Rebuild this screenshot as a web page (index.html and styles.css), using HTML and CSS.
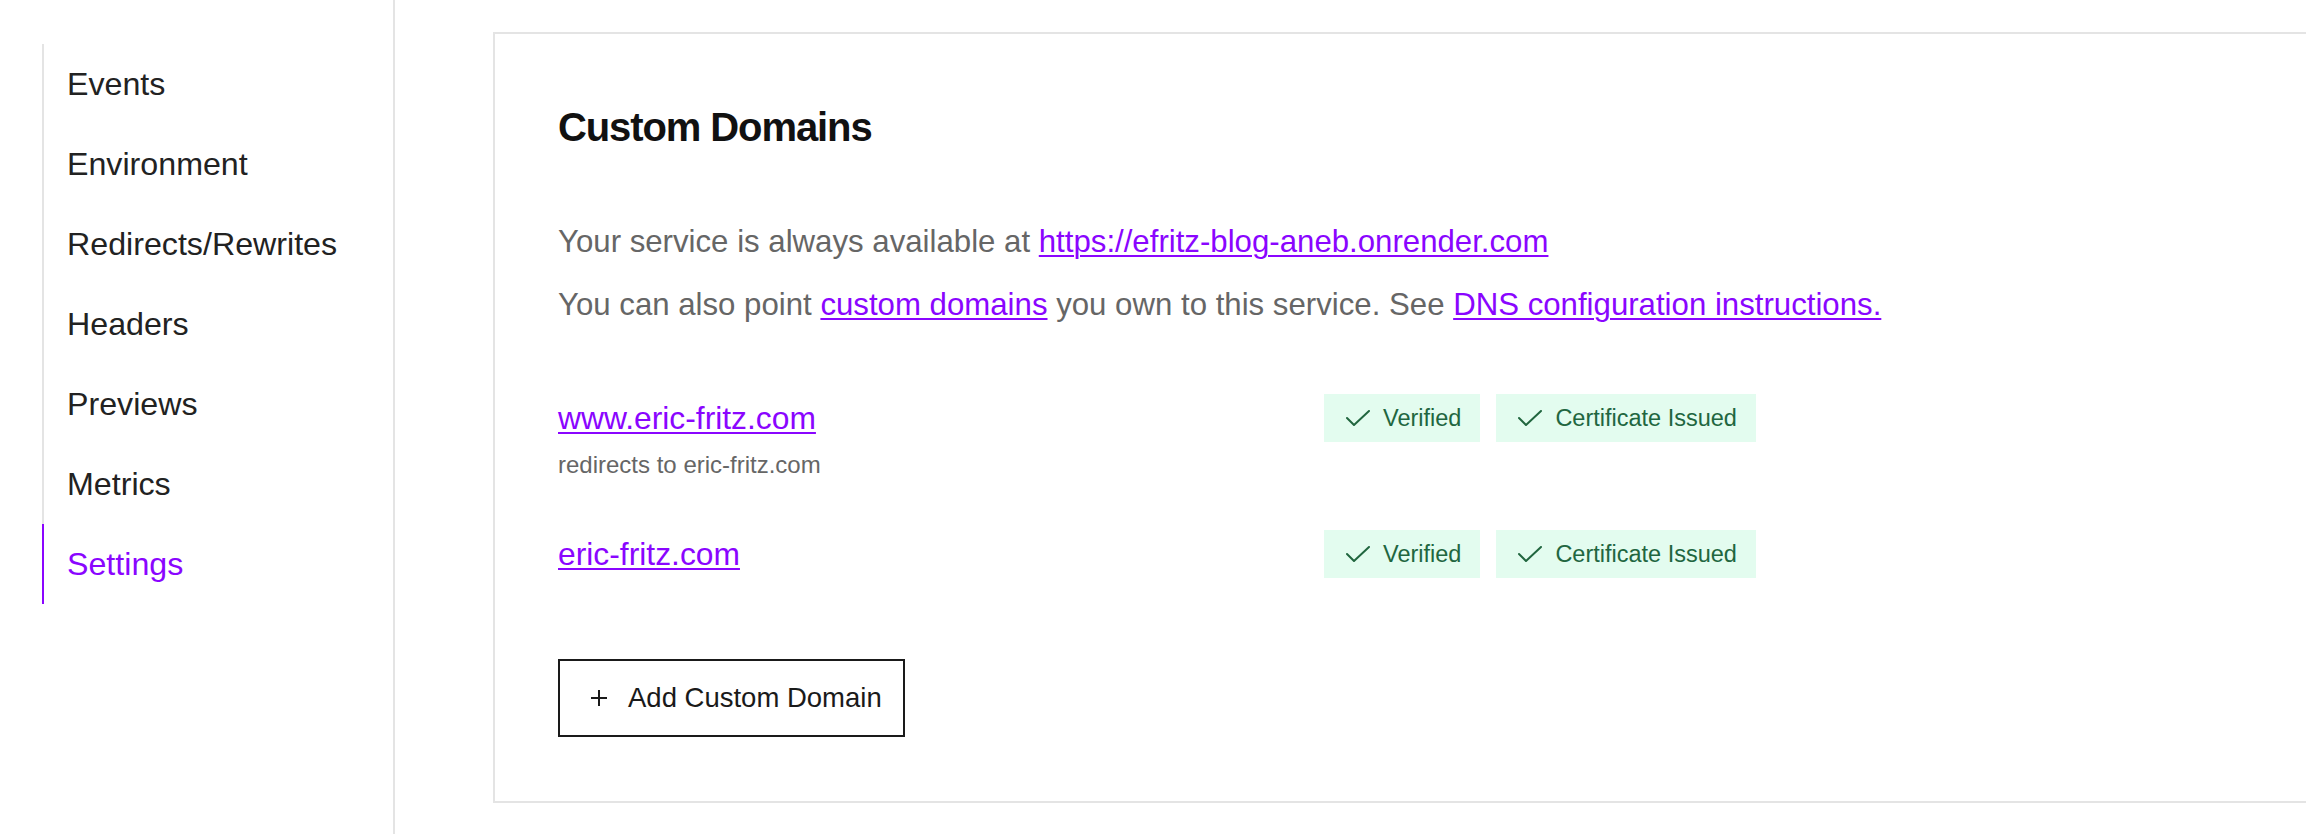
FILE: index.html
```html
<!DOCTYPE html>
<html lang="en">
<head>
<meta charset="utf-8">
<title>Settings – Custom Domains</title>
<link rel="stylesheet" href="styles.css">
</head>
<body>
<div class="app">
  <aside class="sidebar">
    <nav class="subnav">
      <a class="nav-item" href="#">Events</a>
      <a class="nav-item" href="#">Environment</a>
      <a class="nav-item" href="#">Redirects/Rewrites</a>
      <a class="nav-item" href="#">Headers</a>
      <a class="nav-item" href="#">Previews</a>
      <a class="nav-item" href="#">Metrics</a>
      <a class="nav-item active" href="#">Settings</a>
    </nav>
  </aside>
  <main class="content">
    <section class="card">
      <h2 class="card-title">Custom Domains</h2>
      <p class="note note-first">Your service is always available at <a class="link" href="#">https://efritz-blog-aneb.onrender.com</a></p>
      <p class="note">You can also point <a class="link" href="#">custom domains</a> you own to this service. See <a class="link" href="#">DNS configuration instructions.</a></p>

      <div class="domains">
        <div class="domain-row">
          <div class="domain-name">
            <a class="link domain-link" href="#">www.eric-fritz.com</a>
            <div class="redirect">redirects to eric-fritz.com</div>
          </div>
          <div class="badges">
            <span class="badge"><svg class="check" viewBox="0 0 24 16" aria-hidden="true"><polyline points="1,8 8,15 23,1"/></svg>Verified</span>
            <span class="badge"><svg class="check" viewBox="0 0 24 16" aria-hidden="true"><polyline points="1,8 8,15 23,1"/></svg>Certificate Issued</span>
          </div>
        </div>
        <div class="domain-row">
          <div class="domain-name">
            <a class="link domain-link" href="#">eric-fritz.com</a>
          </div>
          <div class="badges">
            <span class="badge"><svg class="check" viewBox="0 0 24 16" aria-hidden="true"><polyline points="1,8 8,15 23,1"/></svg>Verified</span>
            <span class="badge"><svg class="check" viewBox="0 0 24 16" aria-hidden="true"><polyline points="1,8 8,15 23,1"/></svg>Certificate Issued</span>
          </div>
        </div>
      </div>

      <button class="add-btn" type="button">
        <svg class="plus" viewBox="0 0 16 16" aria-hidden="true"><path d="M8 0v16M0 8h16"/></svg>
        <span>Add Custom Domain</span>
      </button>
    </section>
  </main>
</div>
</body>
</html>
```

FILE: styles.css
```css
* { box-sizing: border-box; }

html, body {
  margin: 0;
  padding: 0;
  background: #ffffff;
}

body {
  font-family: "Liberation Sans", Arial, sans-serif;
  color: #222222;
}

.app {
  display: flex;
  min-height: 834px;
}

/* Sidebar */
.sidebar {
  flex: 0 0 395px;
  border-right: 2px solid #e4e4e4;
  padding: 44px 0 0 42px;
}

.subnav {
  display: flex;
  flex-direction: column;
  border-left: 2px solid #e4e4e4;
}

.nav-item {
  display: flex;
  align-items: center;
  height: 80px;
  padding-left: 23px;
  font-size: 32.2px;
  color: #222222;
  text-decoration: none;
}

.nav-item.active {
  color: #8a05ff;
  margin-left: -2px;
  border-left: 2px solid #8a05ff;
}

/* Main */
.content {
  flex: 1;
  padding: 32px 0 0 98px;
  min-width: 0;
}

.card {
  border: 2px solid #e4e4e4;
  border-right: none;
  padding: 68px 0 64px 63px;
}

.card-title {
  margin: 0;
  font-size: 40px;
  line-height: 50px;
  font-weight: 700;
  letter-spacing: -1.1px;
  color: #111111;
}

.note {
  margin: 0;
  font-size: 31.2px;
  line-height: 44px;
  color: #666666;
}

.note-first {
  margin-top: 68px;
  margin-bottom: 19px;
}

.link {
  color: #8a05ff;
  text-decoration: underline;
  text-decoration-thickness: 2px;
  text-underline-offset: 3px;
}

/* Domains */
.domains {
  display: flex;
  flex-direction: column;
  gap: 49px;
  margin-top: 67px;
}

.domain-row {
  display: grid;
  grid-template-columns: 766px auto;
  align-items: start;
}

.domain-link {
  display: inline-block;
  font-size: 31.8px;
  line-height: 48px;
}

.redirect {
  margin-top: 7px;
  font-size: 24px;
  line-height: 32px;
  color: #666666;
}

.badges {
  display: flex;
  gap: 16px;
}

.badge {
  display: inline-flex;
  align-items: center;
  gap: 13px;
  height: 48px;
  padding: 0 19px 0 22px;
  background: #e3fcef;
  color: #21663f;
  font-size: 23.5px;
  white-space: nowrap;
}

.check {
  width: 24px;
  height: 16px;
  fill: none;
  stroke: #21663f;
  stroke-width: 2;
  stroke-linecap: round;
  stroke-linejoin: round;
}

/* Button */
.add-btn {
  display: inline-flex;
  align-items: center;
  gap: 21px;
  height: 78px;
  margin-top: 81px;
  padding: 0 21px 0 31px;
  border: 2px solid #1a1a1a;
  border-radius: 0;
  background: #ffffff;
  color: #1a1a1a;
  font-family: "Liberation Sans", Arial, sans-serif;
  font-size: 27.5px;
  cursor: pointer;
}

.plus {
  width: 16px;
  height: 16px;
  stroke: #1a1a1a;
  stroke-width: 2;
  fill: none;
}
```
